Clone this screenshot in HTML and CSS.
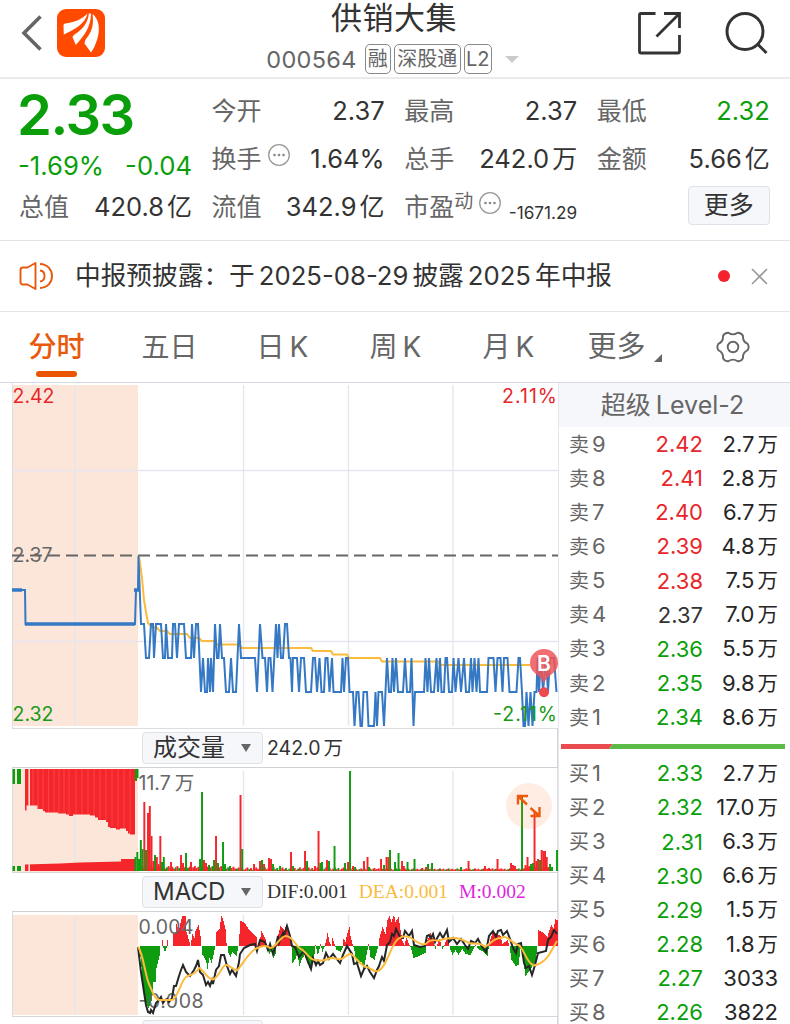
FILE: index.html
```
<!DOCTYPE html>
<html lang="zh-CN">
<head>
    <meta charset="UTF-8">
    <meta name="viewport" content="width=device-width, initial-scale=1.0">
    <title>供销大集 000564</title>
    <link rel="stylesheet" href="styles.css">
</head>
<body>
    <div class="header">
        <div class="header-left">
            <svg class="back" width="22" height="38" viewBox="0 0 22 38"><path d="M20.500 2.500 4 19l16.500 16.500" fill="none" stroke="#666" stroke-width="3.600"/></svg>
            <svg width="48" height="48" viewBox="0 0 48 48">
                <rect width="48" height="48" rx="9" fill="#ff4a00"/>
                <path d="M6.500 17Q6 15 8 14.500C18 13.500 25 10 30.500 4.500 28 15 18 20 6.800 25.500Z" fill="#fff"/>
                <path d="M31.800 4.500 34 4.500C34 17 28 26 18.800 36L15.500 28Q16 26.500 17.500 25.500C26 20 31 14 31.800 4.500Z" fill="#fff"/>
                <path d="M35.500 5C42 10 43.500 20 40 31Q38 38 34 43.500L27.500 34.500Q27.500 32 29 30C35 23 37 15 35.500 5Z" fill="#fff"/>
            </svg>
        </div>
        <div class="header-title">
            <div class="stock-name">供销大集</div>
            <div class="stock-code">
                <span class="code">000564</span>
                <span class="tag">融</span>
                <span class="tag tag-wide">深股通</span>
                <span class="tag tag-l2">L2</span>
                <span class="arrow-down"></span>
            </div>
        </div>
        <div class="header-right">
            <svg width="44" height="44" viewBox="0 0 44 44" fill="none" stroke="#333" stroke-width="2.800">
                <path d="M18.500 2.500H4Q2.500 2.500 2.500 4V40.500Q2.500 42 4 42H41Q42.500 42 42.500 40.500V24"/>
                <path d="M27 2.500H42.500V17M42 3 19.500 25.500"/>
            </svg>
            <svg width="44" height="44" viewBox="0 0 44 44" fill="none" stroke="#333" stroke-width="3">
                <circle cx="21" cy="20.500" r="18"/><path d="M33.500 33 42.500 42"/>
            </svg>
        </div>
    </div>

    <div class="quote">
        <div class="price-box">
            <div class="price">2.33</div>
            <div class="change"><span>-1.69%</span><span>-0.04</span></div>
        </div>
        <div class="cell"><label>今开</label><b>2.37</b></div>
        <div class="cell"><label>最高</label><b>2.37</b></div>
        <div class="cell"><label>最低</label><b class="green">2.32</b></div>
        <div class="cell"><label>换手<svg class="info" width="24" height="24" viewBox="0 0 24 24"><circle cx="12" cy="12" r="10.300" fill="none" stroke="#999" stroke-width="1.300"/><g fill="#888"><circle cx="7.500" cy="12" r="1.300"/><circle cx="12" cy="12" r="1.300"/><circle cx="16.500" cy="12" r="1.300"/></g></svg></label><b>1.64%</b></div>
        <div class="cell"><label>总手</label><b>242.0<i>万</i></b></div>
        <div class="cell"><label>金额</label><b>5.66<i>亿</i></b></div>
        <div class="cell"><label>总值</label><b>420.8<i>亿</i></b></div>
        <div class="cell"><label>流值</label><b>342.9<i>亿</i></b></div>
        <div class="cell"><label>市盈<sup>动</sup><svg class="info" width="24" height="24" viewBox="0 0 24 24"><circle cx="12" cy="12" r="10.300" fill="none" stroke="#999" stroke-width="1.300"/><g fill="#888"><circle cx="7.500" cy="12" r="1.300"/><circle cx="12" cy="12" r="1.300"/><circle cx="16.500" cy="12" r="1.300"/></g></svg></label><b class="small">-1671.29</b></div>
        <div class="cell more-cell"><button class="more">更多</button></div>
    </div>

    <div class="notice">
        <svg width="36" height="30" viewBox="0 0 36 30" fill="none" stroke="#e8590c" stroke-width="1.900">
            <path d="M16.500 2V28L8.500 23.500H4Q1.500 23.500 1.500 21V9Q1.500 6.500 4 6.500H8.500Z" stroke-linejoin="round"/>
            <path d="M21 9.500C27 10 27 20 21 20.500M21 3C37 3.500 37 26.500 21 27"/>
        </svg>
        <div class="notice-text">中报预披露：于<em>2025-08-29</em>披露<em>2025</em>年中报</div>
        <span class="dot"></span>
        <svg width="17" height="17" viewBox="0 0 17 17"><path d="M1 1 16 16M16 1 1 16" stroke="#999" stroke-width="1.600"/></svg>
    </div>

    <div class="tabs">
        <div class="tab active">分时</div>
        <div class="tab">五日</div>
        <div class="tab">日<em>K</em></div>
        <div class="tab">周<em>K</em></div>
        <div class="tab">月<em>K</em></div>
        <div class="tab tab-more">更多<span class="corner"></span></div>
        <div class="tab tab-set"><svg width="34" height="34" viewBox="-17 -17 34 34" fill="none" stroke="#666" stroke-width="1.900"><path d="M-4.600-14.300Q0-11 4.600-14.300 8.300-14.400 10-11.100 9.500-5.500 14.700-3.100 16.600 0 14.700 3.100 9.500 5.500 10 11.100 8.300 14.400 4.600 14.300 0 11-4.600 14.300-8.300 14.400-10 11.100-9.500 5.500-14.700 3.100-16.600 0-14.700-3.100-9.500-5.500-10-11.100-8.300-14.400-4.600-14.300Z"/><circle r="5.300"/></svg></div>
    </div>

    <div class="main">
        <div class="charts">
            <svg class="chart" width="558" height="346" viewBox="0 383 558 346">
                <rect x="12" y="385" width="126" height="341" fill="#fce6da"/>
                <path d="M12 470.500H558M12 641.500H558M75 385V726M243.500 385V726M348.500 385V726M453 385V726" class="grid"/>
                <path d="M12.500 383V729M12 728.500H558" class="frame"/>
                <path d="M12 555.500H558" stroke="#666" stroke-width="1.800" stroke-dasharray="12 6" stroke-dashoffset="0"/>
                <polyline class="avg" points="139,556 142,578 144,600 146,612 148,623 152,627 157,628 160,631 167,631 170,634 187,634 190,638 199,638 202,641 214,641 217,644.500 239,644.500 242,648 311,648 313,651 331,651 333,654.500 347,654.500 349,658 380,658 382,661.500 438,661.500 441,665 530,665"/>
                <path d="M12 590H22M25 624H135M134 590H139" stroke="#3578c4" stroke-width="3.600"/>
                <polyline class="line" id="price-line"/>
                <g class="axis">
                    <text x="12.500" y="402.500" fill="#e8262b">2.42</text>
                    <text x="12.500" y="562" fill="#666">2.37</text>
                    <text x="12.500" y="721" fill="#189a18">2.32</text>
                    <text x="502" y="402.500" fill="#e8262b" textLength="55">2.11%</text>
                    <text x="493" y="721" fill="#189a18" textLength="64">-2.11%</text>
                </g>
                <path d="M544 684C542 675 530 674 530 663A14 14 0 0 1 558 663C558 674 546 675 544 684Z" fill="#ef5558" opacity=".85"/>
                <circle cx="544" cy="692.300" r="5" fill="#ee4b50"/>
                <text x="544" y="671" text-anchor="middle" class="mark">B</text>
            </svg>

            <div class="bar">
                <button class="select"><span>成交量</span><i></i></button>
                <span class="bar-value">242.0<em>万</em></span>
            </div>
            <svg class="chart" width="558" height="104" viewBox="0 768 558 104">
                <rect x="12" y="769" width="126" height="103" fill="#fce6da"/>
                <path d="M75 769V871M243.500 771V871M453 771V871" class="grid"/>
                <path d="M12.500 768V872M557.500 768V872" class="frame"/>
                <path d="M25 769V810.500H26.500V805.500H37.500V809H43V811H45V812.500H58V813.500H66V814.500H69V816H73V814.500H90V815.500H95V817.500H98V820H106V822H108V827H110V828H116V829.500H120V828.500H126V831H128V833.500H130V834.500H135V769Z" fill="#f5262b"/>
                <path d="M25 871V864.500L60 863.500 80 862.500 121 861.500V859H135V871Z" fill="#f5262b"/>
                <path d="M29.200 769V871" stroke="#fce6da" stroke-width="1.500"/>
                <path d="M33 769V805M38 769V809M43 769V810M48.500 769V812M54 769V812M59 769V813M64 769V814M69 769V815M76 769V814M82 769V814M88 769V815M94 769V815M100 769V819M106 769V821M112 769V827M118 769V828M124 769V828M130 769V833" stroke="#ff6060" stroke-width=".5"/>
                <path d="M12.500 769H15V784H12.500ZM17 769H21V784H17ZM12.500 866H15V871H12.500ZM17 866H21V871H17ZM135 769H138.500V778H137V781H135Z" fill="#109c10"/>
                <g id="volume"></g>
                <text x="138.500" y="790" class="axis" fill="#666">11.7<tspan dx="4">万</tspan></text>
                <circle cx="529" cy="806" r="23" fill="#ff8340" opacity=".14"/>
                <path d="M518 804.500V796H528M519 797 527 804.500M539.500 807V816H530.500M538.500 815 530.500 808" fill="none" stroke="#ee5a0c" stroke-width="2.400"/>
            </svg>

            <div class="bar">
                <button class="select"><span>MACD</span><i></i></button>
                <div class="legend"><span>DIF:0.001</span><span class="dea">DEA:0.001</span><span class="m">M:0.002</span></div>
            </div>
            <svg class="chart" width="558" height="104" viewBox="0 912 558 104">
                <rect x="12" y="915" width="126" height="100" fill="#fce6da"/>
                <path d="M75 915V1015M243.500 915V1015M348.500 915V1015M453 915V1015" class="grid"/>
                <path d="M12.500 912V1016M557.500 912V1016" class="frame"/>
                <g id="macd" shape-rendering="crispEdges"></g>
                <g class="axis" fill="#666">
                    <text x="138.500" y="934" textLength="55">0.004</text>
                    <text x="138.500" y="1008" textLength="65">-0.008</text>
                </g>
                <polyline class="dif" points="138,947 141,972 144,992 146,1005 148,1012 150,1013 151,1010 153,1013 156,1003 158,1001 161,997 163,1003 165,1000 167,999 169,1002 172,998 174,986 176,986 179,976 181,970 183,965 186,972 190,976 194,970 196,966 198,960 200,972 203,975 206,985 208,982 210,986 212,980 213,984 216,970 219,966 221,955 224,955 227,966 230,974 232,970 236,976 239,962 240,954 244,948 250,945 255,944 257,951 260,940 265,942 268,950 270,944 273,954 276,945 278,936 279,943 283,933 284,936 287,926 290,936 292,946 295,947 299,957 304,951 308,962 311,969 313,958 316,965 318,961 320,965 323,963 326,953 329,959 333,954 336,958 340,963 343,955 347,946 352,954 354,964 357,963 361,976 364,969 367,966 370,972 374,978 377,970 379,966 382,957 384,961 387,945 390,942 392,934 394,936 396,929 400,937 403,938 405,931 409,936 412,931 414,945 420,947 425,946 427,936 429,935 431,938 433,934 435,942 440,933 443,938 447,930 449,942 453,938 457,944 461,939 465,945 468,949 471,941 475,943 478,939 481,945 486,952 489,936 493,931 496,937 498,931 501,930 503,935 507,931 510,939 513,948 516,953 518,944 521,943 524,963 526,968 529,966 532,975 535,965 538,953 546,951 548,940 551,937 554,930 557,934"/>
                <path class="dea-line" d="M138 947C143 952 145 975 149 984S155 1000 160 1000H172C178 999 181 980 186 977S195 975 199 968C204 970 207 979 213 979.500 220 976 222 965 226 965S233 970 237 970.500C242 965 247 955 255 949 261 947 265 944 270 948 276 948 280 936 286 936 293 936 296 947 301 949S309 960 315 960 322 962 328 959 336 960 341 959 347 953 351 954C357 958 360 965 366 967 371 967 373 973 378 971 387 967 391 944 398 939S410 937 414 940C419 943 424 947 428 942 432 938 437 942 441 940S449 938 455 938 464 941 469 943 479 941 485 947C492 943 493 938 501 938 507 934 511 943 518 945 523 946 526 962 533 965 538 966 545 961 549 955L557 941"/>
            </svg>
            <div class="bar">
                <button class="select"></button>
            </div>
        </div>

        <div class="book">
            <div class="book-title">超级<em>Level-2</em></div>
            <div id="sell"></div>
            <svg class="ratio" width="224" height="5" viewBox="0 0 224 5"><path d="M0 0H52L48 5H0Z" fill="#ea4b4e"/><path d="M52 0H224V5H48Z" fill="#5cbb46"/></svg>
            <div id="buy"></div>
        </div>
    </div>

    <script>
        const red = '#f5262b';
        const green = '#109c10';

        // Order book: level, price, volume, unit
        const sell = [
            ['9', '2.42', '2.7', '万'], ['8', '2.41', '2.8', '万'], ['7', '2.40', '6.7', '万'],
            ['6', '2.39', '4.8', '万'], ['5', '2.38', '7.5', '万'], ['4', '2.37', '7.0', '万'],
            ['3', '2.36', '5.5', '万'], ['2', '2.35', '9.8', '万'], ['1', '2.34', '8.6', '万']
        ];
        const buy = [
            ['1', '2.33', '2.7', '万'], ['2', '2.32', '17.0', '万'], ['3', '2.31', '6.3', '万'],
            ['4', '2.30', '6.6', '万'], ['5', '2.29', '1.5', '万'], ['6', '2.28', '1.8', '万'],
            ['7', '2.27', '3033', ''], ['8', '2.26', '3822', '']
        ];

        function loadBook(id, name, rows) {
            document.getElementById(id).innerHTML = rows.map(([n, price, vol, unit]) => {
                const color = price > '2.37' ? 'red' : price < '2.37' ? 'green' : '';
                return `<div class="row"><span class="level">${name}<em>${n}</em></span>` +
                    `<span class="row-price ${color}">${price}</span>` +
                    `<span class="row-vol">${vol}${unit ? `<i>${unit}</i>` : ''}</span></div>`;
            }).join('');
        }

        // Price line: x position and a letter for the price level
        const level = { o: 556, z: 590, a: 624, b: 658, c: 692, d: 726 };
        const ticks = '12.5z 25z 25.5a 135a 136z 138z 138.5o 141a 144a 146b 149b 151a 153a 154b 156a 161a 163b 165b 166a 168b 172b 173a 175a 177b 179a 184a 186b 191b 192a 194b 196a 198a 201c 203b 205c 207c 208b 210c 211b 213c 215a 217b 218.5b 220a 222b 224b 226c 229c 231b 233c 236c 239a 241b 255b 257c 260a 262.5b 265b 267c 268.5b 270.5b 272.5c 276a 277.5b 279a 281b 283b 285a 287a 289b 290.500b 292c 293b 297b 299c 301b 304b 306c 311c 313b 315b 317c 319.5b 321.5c 324c 325.5b 327.5b 329.5c 332b 333.5c 341c 342.5b 344c 346b 348b 349.5c 353c 354.5d 356.5c 358.5c 360.5d 362d 363.5c 367c 368.5d 374d 375.5c 377d 378.5c 382c 384d 387b 389c 391c 392.5b 394c 396b 398c 403c 405b 407c 410c 411.5b 413.5d 415c 424c 425.5b 427.5c 429b 431c 434c 436.5b 438c 440b 441.5c 444c 445.5b 447b 449c 452c 453.5b 455.5c 458.5b 461c 464b 466c 469c 471b 472.5c 474.5b 476.5c 478.5b 480c 487c 488.5b 493.5b 495.5c 497.5b 500.5b 502.5c 504b 507.5b 509.5c 516.5c 518.5b 520b 522c 523.5d 525d 526.5c 528.5d 530.5c 532.5d 534.5c 536.5c 537.5b 539c 541b 543c 546b 548c 550b 554b 556.5c';
        document.getElementById('price-line').setAttribute('points',
            ticks.split(' ').map(t => parseFloat(t) + ',' + level[t.slice(-1)]).join(' '));

        // Volume spikes, everything else is low background volume
        const spikes = '135.5:14g 137.3:19g 139:12g 140.8:31g 142.5:22g 144.3:69r 146:21g 148:58r 149.8:65r 151.5:35r 153.3:10r 155:16g 156.8:14r 158.5:7r 160.3:35r 162:9g 163.8:14g 171:9r 181:16r 183:8r 186:18g 191:9r 200:12g 202:79g 204:11r 206:8r 209:6g 214:11g 216:35r 218:8g 223:29g 225:7g 230:5g 240.5:76r 242.2:22g 254:7r 260:10r 262:11g 264:7r 269:13r 271:12r 273:7g 280:5g 291:19r 293:5g 305:20r 307:10g 315:5r 318.5:40r 320.300:8g 322:9g 327:11r 329:10g 334.5:25g 345:8g 348:9r 350:100g 353:5r 355:4g 364:10r 367.5:14r 369:4g 374.5:3r 381:12r 384:6g 386.5:14r 388.3:14r 390:21g 395:9g 398.5:18g 402:10r 403.8:5r 407.5:9g 414.5:12g 422:3r 426:4r 428:7g 432:8g 440:2g 461:4g 468.5:10r 485:5r 489:3r 497.5:12r 511:8r 513:6r 515:5r 522:74g 525.5:6r 527.5:14r 529.300:5r 531:7g 533:8g 534.5:60r 536.3:10r 538:12r 540:11g 541.7:21r 543.4:20r 545:20r 546.700:14r 548.4:4r 550:7g 552:4g 557:21g';
        let bars = '';
        for (let i = 0; i < 236; i++) {
            const x = 138 + i * 1.75;
            const h = (x < 235 || x > 522 ? 2.500 : 1.2) + (i * 7 % 5) * (x < 345 ? .6 : .35);
            bars += `<rect x="${x}" y="${871 - h}" width="1.9" height="${h}" fill="${i * 11 % 7 < 2 ? green : red}"/>`;
        }
        spikes.split(' ').forEach(s => {
            const [x, v] = s.split(':');
            const h = parseFloat(v);
            bars += `<rect x="${x - .95}" y="${871 - h}" width="1.95" height="${h}" fill="${v.endsWith('g') ? green : red}"/>`;
        });
        document.getElementById('volume').innerHTML = bars;

        // MACD histogram anchors, height in px above the zero line
        const hist = [[139,0],[142,-32],[145,-55],[148,-62],[151,-55],[153,-36],[155,-36],[156,-22],[159,-10],[160,0],[161,0],[162,6],[163,-2],[164.5,-6],[166,-2],[167,6],[168,0],[172,0],[173,12],[175,13],[176,22],[178,15],[179,18],[181,27],[182,30],[185,30],[186,14],[188,7],[190,0],[192,12],[194,8],[195,15],[198,21],[200,10],[201,0],[202,-9],[204,-12],[206,-17],[207,-23],[209,-12],[211,-17],[213,-9],[215,0],[216,14],[219,17],[221,30],[223,25],[225,17],[226,3],[227,0],[228,-7],[230,-11],[232,-6],[236,-10],[238,0],[239,12],[240,25],[244,23],[248,17],[252,13],[256,9],[257,0],[259,3],[261,15],[263,11],[265,7],[267,-3],[269,-8],[272,-3],[273,-12],[275,-8],[276,3],[280,20],[284,16],[286,21],[287,16],[289,8],[291,0],[292,-17],[295,-13],[297,-8],[299,-20],[301,-14],[304,-9],[309,-22],[312,-18],[314,-8],[315,1],[317,-8],[318.5,-6],[320,2],[322,-6],[324,-1],[326,7],[327,13],[329,4],[331,0],[332,8],[334,2],[336,-4],[340,-6],[342,-2],[343,7],[345,4],[347,13],[349,19],[350,10],[352,2],[354,-5],[356,-18],[361,-16],[363,-24],[365,-14],[367,-4],[368,2],[370,-11],[374,-14],[377,-3],[378,0],[379,8],[382,19],[385,12],[387,26],[389,30],[391,24],[393.5,31],[395,24],[398,29],[400,16],[402,5],[404,1],[406,8],[409,1],[411,-4],[413,-12],[419,-10],[425,-7],[426,3],[430,13],[433,5],[435,-3],[439,7],[442,-3],[447,8],[450,-4],[452,-9],[455,-4],[458,-9],[462,-3],[465,-8],[470,-9],[475,1],[478,-3],[483,-6],[487,-10],[489,3],[492,14],[495,13],[500,10],[502,2],[507,6],[509,0],[511,-14],[515,-20],[518,-19],[520,-3],[522,-8],[525,-30],[528,-26],[531,-22],[535,-16],[537,0],[538,16],[543,13],[547,9],[549,16],[551,21],[553,17],[555,27],[558,25]];
        let macd = '';
        let k = 0;
        for (let x = 139; x < 558; x++) {
            while (hist[k + 1][0] < x) k++;
            const [x0, v0] = hist[k], [x1, v1] = hist[k + 1];
            const v = Math.round(v0 + (v1 - v0) * (x - x0) / (x1 - x0));
            if (v) macd += `<rect x="${x}" y="${v > 0 ? 946 - v : 946}" width="1" height="${Math.abs(v)}" fill="${v > 0 ? red : green}"/>`;
        }
        document.getElementById('macd').innerHTML = macd;

        loadBook('sell', '卖', sell);
        loadBook('buy', '买', buy);
    </script>
</body>
</html>
```
FILE: styles.css
```
* {
    box-sizing: border-box;
    margin: 0;
    padding: 0;
}

body {
    width: 790px;
    height: 1024px;
    overflow: hidden;
    background-color: #fff;
    color: #333;
    font-family: Inter, "Noto Sans CJK SC", sans-serif;
    font-weight: 400;
}

i, em {
    font-style: normal;
}

svg {
    display: block;
    flex-shrink: 0;
}

button {
    font-family: inherit;
    color: #333;
    background-color: #f6f7fa;
    border: 1px solid #dfe1e8;
    border-radius: 4px;
}

.red {
    color: #e8262b;
}

.green {
    color: #0a9f0a;
}

/* header */
.header {
    height: 79px;
    display: flex;
    justify-content: space-between;
    border-bottom: 2px solid #ebebeb;
    padding: 0 22px 0 20px;
}

.header-left {
    width: 200px;
    display: flex;
    gap: 15px;
    padding-top: 9px;
}

.back {
    margin-top: 5px;
}

.header-title {
    display: flex;
    flex-direction: column;
    align-items: center;
}

.stock-name {
    font-size: 31px;
    line-height: 36px;
    letter-spacing: 0.5px;
}

.stock-code {
    display: flex;
    align-items: center;
    gap: 3px;
    height: 32px;
    margin: 7px 3px 0 0;
    color: #666;
}

.code {
    font-size: 23.5px;
    letter-spacing: 0.3px;
    margin-right: 5px;
}

.tag {
    width: 26px;
    height: 30px;
    border: 1px solid #888;
    border-radius: 5px;
    font-size: 20px;
    line-height: 28px;
    text-align: center;
    white-space: nowrap;
}

.tag-wide {
    width: 67px;
}

.tag-l2 {
    width: 28px;
}

.arrow-down {
    margin-left: 10px;
    border: 7px solid transparent;
    border-top-color: #ccc;
    border-bottom: 0;
}

.header-right {
    width: 200px;
    display: flex;
    justify-content: flex-end;
    gap: 43px;
    padding-top: 11px;
}

/* quote */
.quote {
    height: 162px;
    padding: 8px 20px 0 19px;
    display: grid;
    grid-template-columns: repeat(4, 173px);
    grid-template-rows: repeat(3, 48px);
    column-gap: 19.6px;
    border-bottom: 1px solid #e3e3e3;
}

.price-box {
    grid-row: span 2;
    color: #0a9f0a;
}

.price {
    margin-left: -2px;
    font-size: 56px;
    font-weight: 600;
    line-height: 56px;
    letter-spacing: -1.5px;
}

.change {
    display: flex;
    justify-content: space-between;
    margin-left: -1px;
    font-size: 25.7px;
    line-height: 46px;
}

.cell {
    display: flex;
    justify-content: space-between;
    align-items: center;
    white-space: nowrap;
    line-height: 30px;
}

.cell label {
    display: flex;
    color: #666;
    font-size: 25px;
}

.cell sup {
    font-size: 19px;
    line-height: 20px;
}

.cell b {
    font-size: 25.5px;
    font-weight: 400;
}

.cell i, .row i {
    margin-left: 3px;
    font-size: 25px;
}

.cell .small {
    font-size: 17.2px;
    align-self: flex-end;
    margin-bottom: 3px;
}

.info {
    margin: -1px 0 0 5px;
}

.more-cell {
    justify-content: flex-end;
}

.more {
    width: 82px;
    height: 39px;
    font-size: 25px;
    line-height: 36px;
    margin-bottom: 4px;
}

/* notice */
.notice {
    height: 71px;
    display: flex;
    align-items: center;
    padding: 0 22px 0 19px;
    border-bottom: 1px solid #e6e6e6;
}

.notice-text {
    flex-grow: 1;
    margin-left: 20px;
    font-size: 25.7px;
    line-height: 30px;
    white-space: nowrap;
}

.notice em {
    margin: 0 4px;
    font-size: 25.7px;
}

.dot {
    width: 12px;
    height: 12px;
    border-radius: 50%;
    background-color: #f5222d;
    margin-right: 21px;
}

/* tabs */
.tabs {
    height: 71px;
    display: flex;
    border-bottom: 1px solid #d5dae3;
}

.tab {
    width: 113px;
    flex-shrink: 0;
    display: flex;
    justify-content: center;
    align-items: center;
    position: relative;
    color: #666;
    font-size: 28px;
    line-height: 34px;
}

.tab em {
    margin-left: 5px;
}

.tab.active {
    color: #e8590c;
    font-weight: 500;
}

.tab.active::after {
    content: "";
    position: absolute;
    left: 36px;
    bottom: 5px;
    width: 41px;
    height: 6px;
    border-radius: 3px;
    background-color: #ea5504;
}

.tab-more {
    width: 119px;
    font-size: 29px;
}

.tab-set {
    width: 97px;
}

.corner {
    align-self: flex-end;
    margin: 0 0 20px 8px;
    border-left: 8px solid transparent;
    border-bottom: 8px solid #666;
}

/* charts */
.main {
    display: flex;
}

.charts {
    width: 558px;
    flex-shrink: 0;
}

.chart {
    overflow: hidden;
}

.grid {
    stroke: #e6e6ee;
    stroke-width: 1.4;
    fill: none;
}

.frame {
    stroke: #dcdce2;
    stroke-width: 1;
    fill: none;
}

.line, .avg, .dif, .dea-line {
    fill: none;
    stroke-width: 2;
}

.line {
    stroke: #3578c4;
}

.avg, .dea-line {
    stroke: #fbbb3c;
}

.dif {
    stroke: #262626;
}

.axis {
    font-size: 19.5px;
}

.mark {
    fill: #fff;
    font-size: 21px;
    font-weight: 600;
}

.bar {
    height: 40px;
    margin-left: 12px;
    padding-left: 130px;
    display: flex;
    align-items: center;
    gap: 4px;
    border-top: 1px solid #d5d5da;
    border-bottom: 1px solid #d0d0d6;
    border-right: 1px solid #d5d5da;
}

.chart:first-child + .bar {
    height: 39px;
    border-top: 0;
}

.select {
    width: 121px;
    height: 32px;
    padding: 0 11px 0 10px;
    display: flex;
    justify-content: space-between;
    align-items: center;
    font-size: 24px;
    line-height: 30px;
}

.select i {
    border: 5px solid transparent;
    border-top: 8px solid #666;
    border-bottom: 0;
}

.bar-value {
    font-size: 19.5px;
    line-height: 24px;
}

.bar-value em {
    margin-left: 3px;
}

.legend {
    display: flex;
    gap: 11px;
    font-family: "Liberation Serif", serif;
    font-size: 19.5px;
}

.dea {
    color: #fbbb3c;
}

.m {
    color: #e01fe0;
}

/* order book */
.book {
    width: 232px;
    border-left: 1px solid #e6e6ee;
}

.book-title {
    height: 44px;
    padding-right: 4px;
    background-color: #f6f7fa;
    color: #666;
    font-size: 25px;
    line-height: 44px;
    text-align: center;
}

.book-title em {
    margin-left: 5px;
}

.row {
    height: 34.15px;
    display: flex;
    align-items: center;
    padding: 0 12px 0 10px;
    font-size: 22px;
    line-height: 20px;
    white-space: nowrap;
}

.level {
    width: 50px;
    color: #666;
    font-size: 20px;
}

.level em {
    margin-left: 3px;
    font-size: 22px;
}

.row-price {
    width: 84px;
    text-align: right;
}

.row-vol {
    flex-grow: 1;
    text-align: right;
    color: #262626;
}

.row i {
    font-size: 20.5px;
}

.ratio {
    margin: 10px 0 7px 2px;
}
```
